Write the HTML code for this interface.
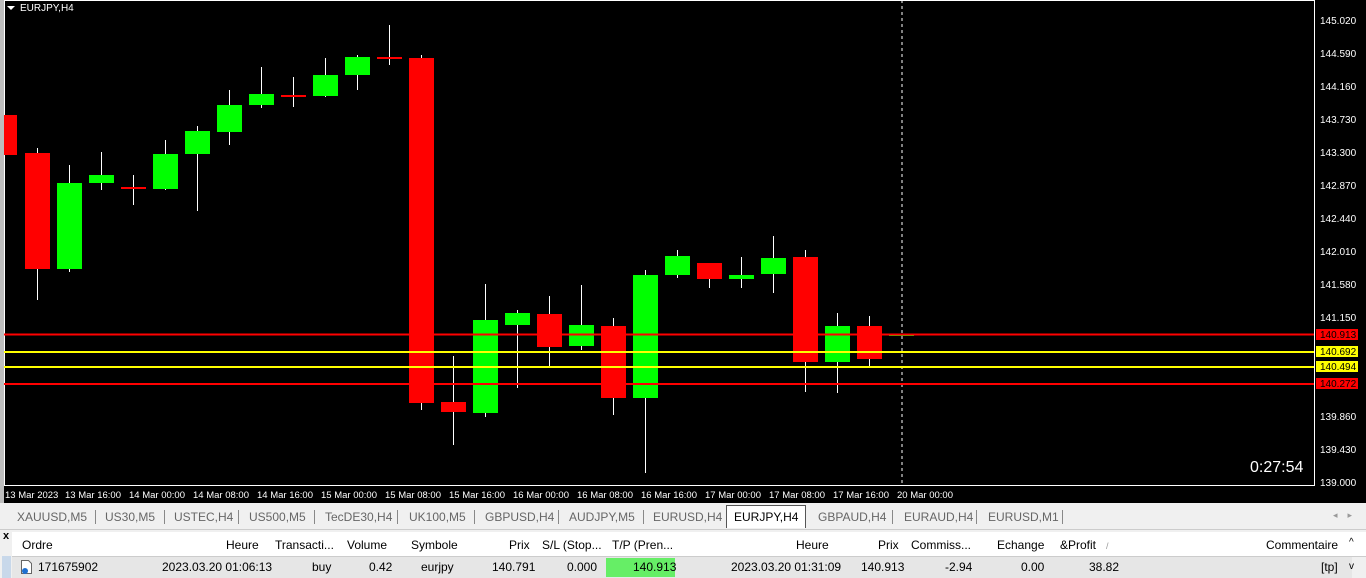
<!DOCTYPE html><html><head><style>
body{margin:0;width:1366px;height:578px;overflow:hidden;background:#f0f0f0;font-family:"Liberation Sans",sans-serif;position:relative}
.t{position:absolute;font-size:12px;color:#000;white-space:nowrap}
.g{position:absolute;font-size:12px;color:#666;white-space:nowrap;top:510px}
.s{position:absolute;top:510px;width:1px;height:14px;background:#888}
</style></head><body>
<div style="position:absolute;left:0;top:0;width:4px;height:503px;background:#bdbdbd"></div>
<svg style="position:absolute;left:4px;top:0" width="1362" height="503" xmlns="http://www.w3.org/2000/svg">
<rect x="0" y="0" width="1362" height="503" fill="#000"/>
<rect x="0.5" y="0.5" width="1310" height="485" fill="none" stroke="#fff"/>
<g font-family="Liberation Sans" font-size="10" fill="#fff">
<polygon points="3,6 11,6 7,10" fill="#fff"/><text x="16" y="11">EURJPY,H4</text>
</g>
<g id="c" stroke-width="1"></g>
<line x1="898" y1="0" x2="898" y2="485" stroke="#fff" stroke-dasharray="3,3"/>
<line x1="0" y1="334.5" x2="1310" y2="334.5" stroke="#f00" stroke-width="2"/>
<line x1="0" y1="352" x2="1310" y2="352" stroke="#ff0" stroke-width="2"/>
<line x1="0" y1="367" x2="1310" y2="367" stroke="#ff0" stroke-width="2"/>
<line x1="0" y1="384" x2="1310" y2="384" stroke="#f00" stroke-width="2"/>
<g font-family="Liberation Sans" font-size="10" fill="#fff">
<text x="1316" y="24">145.020</text><text x="1316" y="57">144.590</text><text x="1316" y="90">144.160</text><text x="1316" y="123">143.730</text><text x="1316" y="156">143.300</text><text x="1316" y="189">142.870</text><text x="1316" y="222">142.440</text><text x="1316" y="255">142.010</text><text x="1316" y="288">141.580</text><text x="1316" y="321">141.150</text><text x="1316" y="420">139.860</text><text x="1316" y="453">139.430</text><text x="1316" y="486">139.000</text>
</g>
<rect x="1312" y="329" width="42" height="11" fill="#f00"/><rect x="1312" y="346" width="42" height="11" fill="#ff0"/><rect x="1312" y="361" width="42" height="11" fill="#ff0"/><rect x="1312" y="378" width="42" height="11" fill="#f00"/>
<g font-family="Liberation Sans" font-size="10" fill="#000"><text x="1316" y="338">140.913</text><text x="1316" y="355">140.692</text><text x="1316" y="370">140.494</text><text x="1316" y="387">140.272</text></g>
<text x="1246" y="472" font-family="Liberation Sans" font-size="16" fill="#fff">0:27:54</text>
<g font-family="Liberation Sans" font-size="9.5" fill="#fff">
<text x="1" y="498">13 Mar 2023</text><text x="61" y="498">13 Mar 16:00</text><text x="125" y="498">14 Mar 00:00</text><text x="189" y="498">14 Mar 08:00</text><text x="253" y="498">14 Mar 16:00</text><text x="317" y="498">15 Mar 00:00</text><text x="381" y="498">15 Mar 08:00</text><text x="445" y="498">15 Mar 16:00</text><text x="509" y="498">16 Mar 00:00</text><text x="573" y="498">16 Mar 08:00</text><text x="637" y="498">16 Mar 16:00</text><text x="701" y="498">17 Mar 00:00</text><text x="765" y="498">17 Mar 08:00</text><text x="829" y="498">17 Mar 16:00</text><text x="893" y="498">20 Mar 00:00</text>
</g>
</svg>
<div style="position:absolute;left:0;top:503px;width:1366px;height:26px;background:#f0f0f0;border-bottom:1px solid #ccc"></div>
<div style="position:absolute;left:726px;top:505px;width:78px;height:22px;background:#fff;border:1px solid #555;border-bottom:none"></div>
<div class="g" style="left:17px">XAUUSD,M5</div><div class="s" style="left:95px"></div>
<div class="g" style="left:105px">US30,M5</div><div class="s" style="left:164px"></div>
<div class="g" style="left:174px">USTEC,H4</div><div class="s" style="left:238px"></div>
<div class="g" style="left:249px">US500,M5</div><div class="s" style="left:314px"></div>
<div class="g" style="left:325px">TecDE30,H4</div><div class="s" style="left:397px"></div>
<div class="g" style="left:409px">UK100,M5</div><div class="s" style="left:474px"></div>
<div class="g" style="left:485px">GBPUSD,H4</div><div class="s" style="left:558px"></div>
<div class="g" style="left:569px">AUDJPY,M5</div><div class="s" style="left:643px"></div>
<div class="g" style="left:653px">EURUSD,H4</div>
<div class="t" style="top:510px;left:734px">EURJPY,H4</div>
<div class="g" style="left:818px">GBPAUD,H4</div><div class="s" style="left:892px"></div>
<div class="g" style="left:904px">EURAUD,H4</div><div class="s" style="left:976px"></div>
<div class="g" style="left:988px">EURUSD,M1</div><div class="s" style="left:1062px"></div>
<div class="t" style="top:510px;left:1333px;color:#999;font-size:9px">◂&nbsp;&nbsp;&nbsp;&nbsp;▸</div>
<div style="position:absolute;left:0;top:531px;width:12px;height:47px;background:#f0f0f0"></div>
<div class="t" style="left:3px;top:530px;font-size:11px;font-weight:bold">x</div>
<div style="position:absolute;left:2px;top:556px;width:9px;height:22px;background:#c8d8ea"></div>
<div style="position:absolute;left:12px;top:532px;width:1354px;height:24px;background:#fff;border-bottom:1px solid #ccc"></div>
<div style="position:absolute;left:12px;top:557px;width:1340px;height:21px;background:#e6e6e6"></div>
<div style="position:absolute;left:606px;top:558px;width:69px;height:19px;background:#66ee66"></div>
<div class="t" style="left:22px;top:538px">Ordre</div>
<div class="t" style="left:226px;top:538px">Heure</div>
<div class="t" style="left:275px;top:538px">Transacti...</div>
<div class="t" style="left:347px;top:538px">Volume</div>
<div class="t" style="left:411px;top:538px">Symbole</div>
<div class="t" style="left:509px;top:538px">Prix</div>
<div class="t" style="left:542px;top:538px">S/L (Stop...</div>
<div class="t" style="left:612px;top:538px">T/P (Pren...</div>
<div class="t" style="left:796px;top:538px">Heure</div>
<div class="t" style="left:878px;top:538px">Prix</div>
<div class="t" style="left:911px;top:538px">Commiss...</div>
<div class="t" style="left:997px;top:538px">Echange</div>
<div class="t" style="left:1060px;top:538px">&amp;Profit&nbsp;&nbsp;&nbsp;<span style="color:#999;font-size:9px">/</span></div>
<div class="t" style="left:1266px;top:538px">Commentaire</div>
<div class="t" style="left:1349px;top:537px;font-size:10px">^</div>
<svg style="position:absolute;left:20px;top:559px" width="14" height="16"><path d="M1.5 1.5h7l3 3v10h-10z" fill="#fff" stroke="#666"/><circle cx="5" cy="12" r="3" fill="#1e6fd0"/></svg>
<div class="t" style="left:38px;top:560px">171675902</div>
<div class="t" style="left:162px;top:560px">2023.03.20 01:06:13</div>
<div class="t" style="left:312px;top:560px">buy</div>
<div class="t" style="left:369px;top:560px">0.42</div>
<div class="t" style="left:421px;top:560px">eurjpy</div>
<div class="t" style="left:492px;top:560px">140.791</div>
<div class="t" style="left:567px;top:560px">0.000</div>
<div class="t" style="left:633px;top:560px">140.913</div>
<div class="t" style="left:731px;top:560px">2023.03.20 01:31:09</div>
<div class="t" style="left:861px;top:560px">140.913</div>
<div class="t" style="left:945px;top:560px">-2.94</div>
<div class="t" style="left:1021px;top:560px">0.00</div>
<div class="t" style="left:1089px;top:560px">38.82</div>
<div class="t" style="left:1321px;top:560px">[tp]</div>
<div class="t" style="left:1349px;top:561px;font-size:10px">v</div>
<script>
var d=[[6,115,155,115,155,0],[33,153,269,148,300,0],[65,183,269,165,272,1],[97,175,183,152,190,1],[129,187,189,175,205,0],[161,154,189,140,190,1],[193,131,154,126,211,1],[225,105,132,90,145,1],[257,94,105,67,108,1],[289,95,96,77,107,0],[321,75,96,58,97,1],[353,57,75,55,90,1],[385,57,59,25,65,0],[417,58,403,55,410,0],[449,402,412,356,445,0],[481,320,413,284,417,1],[513,313,325,310,388,1],[545,314,347,296,366,0],[577,325,346,285,350,1],[609,326,398,318,415,0],[641,275,398,270,473,1],[673,256,275,250,278,1],[705,263,279,263,288,0],[737,275,279,257,288,1],[769,258,274,236,293,1],[801,257,362,250,392,0],[833,326,362,313,393,1],[865,326,359,316,368,0],[897,334,336,334,336,1]];
var s='';d.forEach(function(c){var col=c[5]?'#00ff00':'#ff0000';var x=c[0];
s+='<line x1="'+(x+.5)+'" y1="'+c[3]+'" x2="'+(x+.5)+'" y2="'+c[4]+'" stroke="#fff"/>';
var w=c[0]==6?13:25,l=c[0]==6?0:x-12;
s+='<rect x="'+l+'" y="'+c[1]+'" width="'+w+'" height="'+Math.max(2,c[2]-c[1])+'" fill="'+col+'"/>';});
document.getElementById('c').innerHTML=s;
</script>
</body></html>
